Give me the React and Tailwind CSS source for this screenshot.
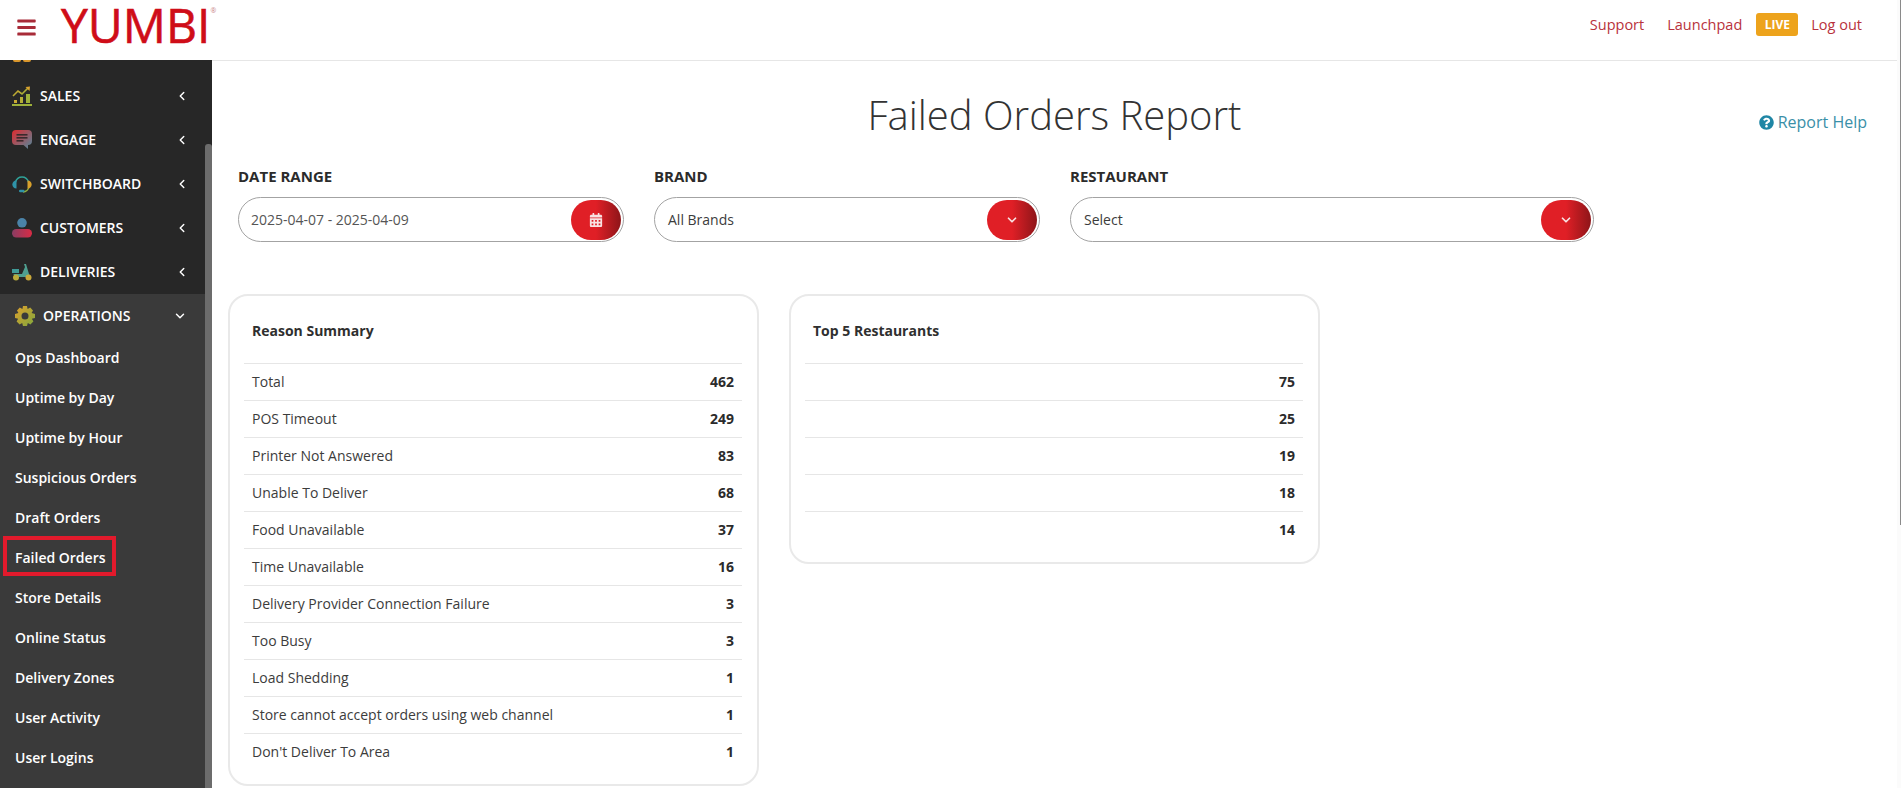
import React from "react";
import { ChevronLeft, ChevronDown } from "lucide-react";
import { FaBars, FaCalendarAlt, FaQuestionCircle } from "react-icons/fa";

// Iconos del menú lateral
function SalesIcon() {
    return (
        <svg width="20" height="20" viewBox="0 0 20 20">
            <defs>
                <linearGradient id="salesGrad" x1="0" y1="0" x2="1" y2="1">
                    <stop offset="0" stopColor="#e0a52c" />
                    <stop offset="1" stopColor="#8fb13a" />
                </linearGradient>
            </defs>
            <path d="M1 10 L6 5 L10 8 L16 2" fill="none" stroke="url(#salesGrad)" strokeWidth="1.6" />
            <path d="M13.5 1 L18 0.5 L17.5 5 Z" fill="#d9a22e" />
            <rect x="2" y="14" width="3" height="3" fill="#c9ab32" />
            <rect x="8" y="11" width="3" height="6" fill="#b5ae36" />
            <rect x="14" y="8" width="4" height="9" fill="#9eb03a" />
            <rect x="0" y="18" width="20" height="2" fill="#9eb03a" />
        </svg>
    );
}

function EngageIcon() {
    return (
        <svg width="20" height="20" viewBox="0 0 20 20">
            <defs>
                <linearGradient id="engageGrad" x1="0" y1="0" x2="1" y2="1">
                    <stop offset="0" stopColor="#e02b2f" />
                    <stop offset="1" stopColor="#4f8a9e" />
                </linearGradient>
            </defs>
            <path d="M4 0 H16 A4 4 0 0 1 20 4 V11 A4 4 0 0 1 16 15 V19 L11.5 15 H4 A4 4 0 0 1 0 11 V4 A4 4 0 0 1 4 0 Z" fill="url(#engageGrad)" />
            <rect x="4.5" y="4" width="11" height="1.6" fill="#3a2a2c" />
            <rect x="4.5" y="7" width="11" height="1.6" fill="#3a2a2c" />
            <rect x="4.5" y="10" width="7" height="1.6" fill="#3a2a2c" />
        </svg>
    );
}

function SwitchboardIcon() {
    return (
        <svg width="20" height="20" viewBox="0 0 20 20" fill="none">
            <path d="M3.5 8 A6.8 7.2 0 0 1 16.5 8" stroke="#2fa39a" strokeWidth="1.5" />
            <path d="M17 13 A7 6.5 0 0 1 11 18" stroke="#8fae3e" strokeWidth="1.3" />
            <path d="M4.5 6.5 V14.5 C-1 14.5 -1 6.5 4.5 6.5 Z" fill="#2f93a8" />
            <path d="M15.5 6.5 V14.5 C21 14.5 21 6.5 15.5 6.5 Z" fill="#d9a12c" />
            <rect x="7" y="15.8" width="5.5" height="2.4" rx="1.2" fill="#2f93a8" />
        </svg>
    );
}

function CustomersIcon() {
    return (
        <svg width="20" height="20" viewBox="0 0 20 20">
            <defs>
                <linearGradient id="custGrad" x1="0" y1="0" x2="1" y2="0">
                    <stop offset="0" stopColor="#8a3d63" />
                    <stop offset="1" stopColor="#d92b45" />
                </linearGradient>
            </defs>
            <circle cx="10" cy="4.8" r="4.8" fill="#4b83a8" />
            <rect x="0" y="11" width="20" height="8.5" rx="4.2" fill="url(#custGrad)" />
        </svg>
    );
}

function DeliveriesIcon() {
    return (
        <svg width="20" height="18" viewBox="0 0 20 18">
            <path d="M0 6 H7 V10 H0 Z" fill="#3f9a96" />
            <path d="M1 11 H10 L13 4 L12 1 H14 L17 11 L19 14 H5 Z" fill="#4f9f90" />
            <circle cx="4" cy="14.5" r="3" fill="#b9ab3c" />
            <circle cx="16.5" cy="14.5" r="3" fill="#c9a83a" />
        </svg>
    );
}

function OperationsIcon() {
    return (
        <svg width="20" height="20" viewBox="0 0 20 20">
            <defs>
                <linearGradient id="opsGrad" x1="0" y1="0" x2="1" y2="1">
                    <stop offset="0" stopColor="#e0a02c" />
                    <stop offset="1" stopColor="#7fa83e" />
                </linearGradient>
            </defs>
            <path
                fillRule="evenodd"
                d="M8 0 H12 L12.6 3 L15.2 1.6 L18 4.4 L16.6 7 L20 8 V12 L16.9 12.8 L18.4 15.4 L15.4 18.4 L12.8 16.9 L12 20 H8 L7.2 16.9 L4.6 18.4 L1.6 15.4 L3.1 12.8 L0 12 V8 L3.4 7 L2 4.4 L4.8 1.6 L7.4 3 Z M10 6.5 A3.5 3.5 0 1 0 10 13.5 A3.5 3.5 0 1 0 10 6.5 Z"
                fill="url(#opsGrad)"
            />
        </svg>
    );
}

const mainMenu = [
    { label: "SALES", icon: <SalesIcon /> },
    { label: "ENGAGE", icon: <EngageIcon /> },
    { label: "SWITCHBOARD", icon: <SwitchboardIcon /> },
    { label: "CUSTOMERS", icon: <CustomersIcon /> },
    { label: "DELIVERIES", icon: <DeliveriesIcon /> },
];

const opsMenu = [
    "Ops Dashboard",
    "Uptime by Day",
    "Uptime by Hour",
    "Suspicious Orders",
    "Draft Orders",
    "Failed Orders",
    "Store Details",
    "Online Status",
    "Delivery Zones",
    "User Activity",
    "User Logins",
];

const reasons = [
    ["Total", 462],
    ["POS Timeout", 249],
    ["Printer Not Answered", 83],
    ["Unable To Deliver", 68],
    ["Food Unavailable", 37],
    ["Time Unavailable", 16],
    ["Delivery Provider Connection Failure", 3],
    ["Too Busy", 3],
    ["Load Shedding", 1],
    ["Store cannot accept orders using web channel", 1],
    ["Don't Deliver To Area", 1],
];

const topRestaurants = [75, 25, 19, 18, 14];

function Header() {
    return (
        <header className="h-[60px] shrink-0 flex items-center justify-between bg-white">
            <div className="flex items-center">
                <FaBars className="ml-[16px] text-[#a82b38] text-[21px] -mt-[6px]" />
                <span className="ml-[24px] -mt-[10px] text-[48px] leading-none font-medium text-[#cf0d18] [-webkit-text-stroke:0.6px_#cf0d18]">
                    YUMBI
                </span>
                <span className="text-[7px] text-[#c9868a] -mt-[38px]">®</span>
            </div>
            <nav className="flex items-center text-[14.5px] font-medium text-[#b8323c] pr-[35px] -mt-[11px]">
                <a className="mr-[23px]">Support</a>
                <a className="mr-[14px]">Launchpad</a>
                <span className="mr-[13px] h-[23px] w-[42px] flex items-center justify-center rounded-[3px] bg-[#eda31c] text-white text-[12px] font-bold">
                    LIVE
                </span>
                <a>Log out</a>
            </nav>
        </header>
    );
}

function Sidebar() {
    return (
        <aside className="w-[212px] shrink-0 flex bg-[#272727] overflow-hidden">
            <div className="w-[205px] flex flex-col">
                <div className="h-[2px] flex gap-[2px] pl-[13px]">
                    <span className="h-[2px] w-[8px] rounded-b-full bg-[#d9962c]" />
                    <span className="h-[2px] w-[8px] rounded-b-full bg-[#d9962c]" />
                </div>
                <div className="pt-[12px]">
                    {mainMenu.map((item) => (
                        <div key={item.label} className="h-[44px] flex items-center pl-[12px] pr-[16px] text-white">
                            <span className="w-[28px]">{item.icon}</span>
                            <span className="flex-1 pb-[2px] text-[14px] font-semibold">{item.label}</span>
                            <ChevronLeft size={14} strokeWidth={2.5} />
                        </div>
                    ))}
                </div>
                <div className="flex-1 bg-[#3a3a3a]">
                    <div className="h-[44px] flex items-center pl-[15px] pr-[18px] text-white">
                        <span className="w-[28px]">
                            <OperationsIcon />
                        </span>
                        <span className="flex-1 pb-[2px] text-[14px] font-semibold">OPERATIONS</span>
                        <ChevronDown size={14} strokeWidth={2.5} />
                    </div>
                    <div className="pl-[3px]">
                        {opsMenu.map((label) => (
                            <div
                                key={label}
                                className={
                                    label === "Failed Orders"
                                        ? "h-[40px] w-[113px] -mt-[2px] mb-[2px] flex items-center pl-[8px] pt-[2px] border-[4px] border-[#e21a2c] text-[14px] font-semibold text-white whitespace-nowrap"
                                        : "h-[40px] flex items-center pl-[12px] pb-[2px] text-[14px] font-semibold text-white"
                                }
                            >
                                {label}
                            </div>
                        ))}
                    </div>
                </div>
            </div>
            <div className="w-[7px] pt-[84px]">
                <div className="h-full rounded-t-[3px] bg-[#6c6c6c]" />
            </div>
        </aside>
    );
}

function Filter({ label, value, width, dateInput, children }) {
    return (
        <div className={width}>
            <div className="h-[20px] mb-[11px] flex items-center text-[15px] font-bold text-[#2b2b2b]">
                {label}
            </div>
            <div className={`h-[45px] flex items-center justify-between rounded-full border border-[#a3a3a3] pr-[2px] ${dateInput ? "pl-[12px]" : "pl-[13px]"}`}>
                <span className={dateInput ? "text-[14px] text-[#555555]" : "text-[14px] font-medium text-[#3c3c3c]"}>
                    {value}
                </span>
                <span className="h-[40px] w-[50px] flex items-center justify-center rounded-full bg-gradient-to-r from-[#e01f26] from-50% to-[#8e1519] text-[#f8e2e2]">
                    {children}
                </span>
            </div>
        </div>
    );
}

function Card({ title, height, children }) {
    return (
        <section className={`w-[531px] ${height} rounded-[20px] border-2 border-[#e9e9e9] pl-[14px] pr-[15px] bg-white`}>
            <h3 className="h-[67px] flex items-center pl-[8px] pt-[2px] text-[14px] font-bold text-[#2f2f2f]">
                {title}
            </h3>
            {children}
        </section>
    );
}

function Row({ label, value }) {
    return (
        <div className="h-[37px] flex items-center justify-between px-[8px] pb-[2px] border-t border-[#e6e6e6] text-[14px] text-[#3c3c3c]">
            <span>{label}</span>
            <span className="font-bold text-[#2b2b2b]">{value}</span>
        </div>
    );
}

export default function App() {
    return (
        <div className="h-screen flex overflow-hidden bg-white font-['Open_Sans',sans-serif]">
            <div className="flex-1 min-w-0 flex flex-col">
                <Header />
                <div className="flex-1 flex min-h-0">
                    <Sidebar />
                    <main className="flex-1 min-w-0 overflow-hidden border-t border-[#e6e6e6]">
                        <div className="grid grid-cols-[1fr_auto_1fr] items-center h-[68px] mt-[20px] mb-[17px]">
                            <span />
                            <h1 className="text-[40px] font-light text-[#333333]">Failed Orders Report</h1>
                            <a className="justify-self-end flex items-center gap-[4px] text-[16px] text-[#3a8fa8] pr-[30px] mt-[14px]">
                                <FaQuestionCircle className="text-[#1f86a5] text-[15px]" />
                                Report Help
                            </a>
                        </div>
                        <div className="flex gap-[30px] pl-[26px]">
                            <Filter label="DATE RANGE" value="2025-04-07 - 2025-04-09" width="w-[386px]" dateInput>
                                <FaCalendarAlt className="text-[14px]" />
                            </Filter>
                            <Filter label="BRAND" value="All Brands" width="w-[386px]">
                                <ChevronDown size={14} strokeWidth={3} />
                            </Filter>
                            <Filter label="RESTAURANT" value="Select" width="w-[524px]">
                                <ChevronDown size={14} strokeWidth={3} />
                            </Filter>
                        </div>
                        <div className="flex items-start gap-[30px] pl-[16px] mt-[52px]">
                            <Card title="Reason Summary" height="h-[492px]">
                                {reasons.map(([label, value]) => (
                                    <Row key={label} label={label} value={value} />
                                ))}
                            </Card>
                            <Card title="Top 5 Restaurants" height="h-[270px]">
                                {topRestaurants.map((value) => (
                                    <Row key={value} label="" value={value} />
                                ))}
                            </Card>
                        </div>
                    </main>
                </div>
            </div>
            {/* Barra de scroll de la página */}
            <div className="w-[4px] shrink-0 flex justify-end bg-[#fbfbfb]">
                <div className="w-[1px] h-[525px] bg-[#8a8a8a]" />
            </div>
        </div>
    );
}
